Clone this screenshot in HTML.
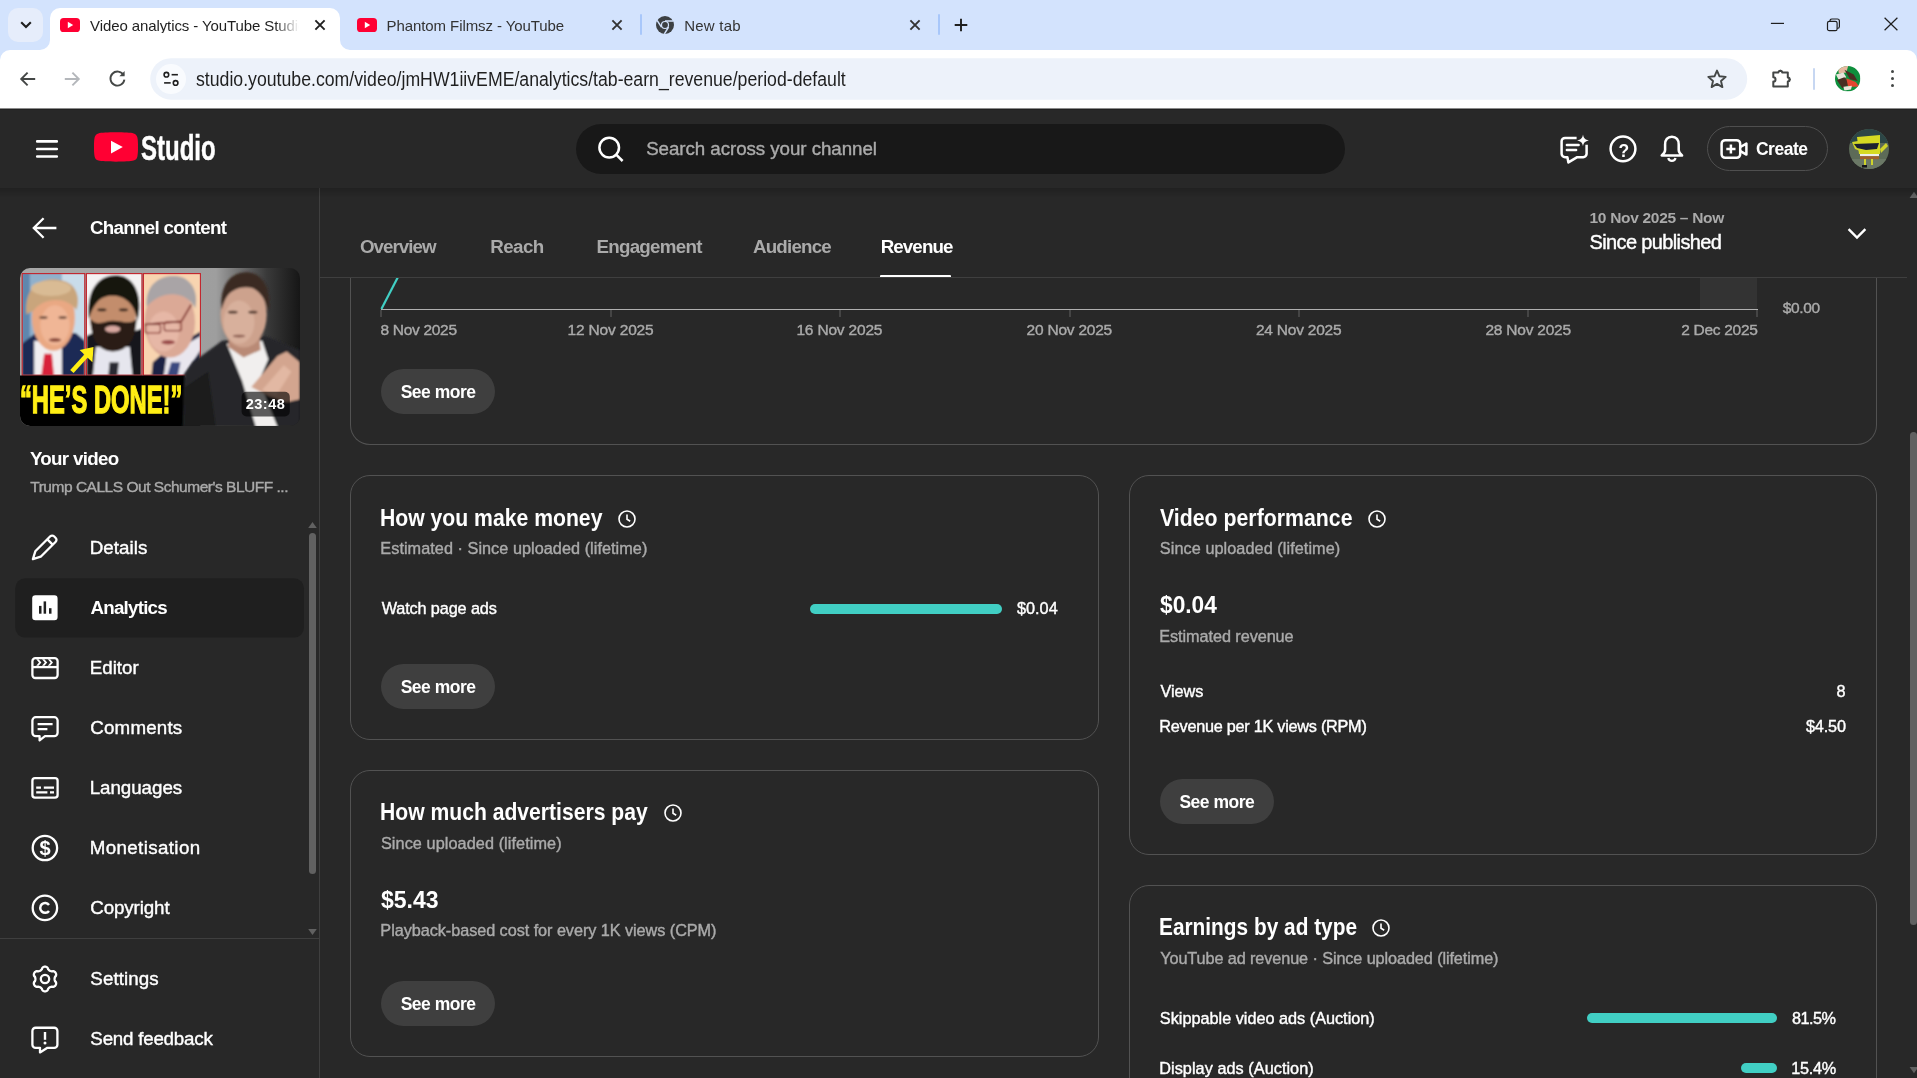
<!DOCTYPE html>
<html lang="en"><head><meta charset="utf-8"><title>Video analytics - YouTube Studio</title>
<style>
html,body{margin:0;padding:0}
body{width:1917px;height:1078px;overflow:hidden;position:relative;background:#282828;font-family:"Liberation Sans",sans-serif}
#root{position:absolute;left:0;top:0;width:1917px;height:1078px;will-change:transform}
.t{position:absolute;white-space:nowrap;line-height:1;z-index:4}
svg{z-index:4;overflow:visible}

#tabstrip{position:absolute;left:0;top:0;width:1917px;height:62px;background:#d3e3fd}
#atab{position:absolute;left:50px;top:8px;width:290px;height:42px;background:#fff;border-radius:10px 10px 0 0}
#toolbar{position:absolute;left:0;top:50px;width:1917px;height:58px;background:#fff;border-radius:10px 10px 0 0}
#urlbar{position:absolute;left:150px;top:59px;width:1597px;height:40px;border-radius:20px;background:#edf2fa}

#ythead{position:absolute;left:0;top:108px;width:1917px;height:80px;background:#282828}
#headshadow{position:absolute;left:0;top:188px;width:1917px;height:9px;background:linear-gradient(rgba(0,0,0,.18),rgba(0,0,0,0));z-index:5}
#search{position:absolute;left:576px;top:124px;width:768.5px;height:50px;border-radius:25px;background:#181818}
#create{position:absolute;left:1707px;top:126px;width:120.5px;height:45px;border-radius:23px;border:1px solid #4f4f4f;box-sizing:border-box}
#sideborder{position:absolute;left:319px;top:188px;width:1px;height:890px;background:#3f3f3f}
#thumb{position:absolute;left:20px;top:268px;width:280px;height:158px;border-radius:10px;background:#111;overflow:hidden}

.card{position:absolute;box-sizing:border-box;border:1px solid #525252;border-radius:20px}
.sm{position:absolute;width:114px;height:45px;border-radius:22.5px;background:#3f3f3f}
.bar{position:absolute;height:10px;border-radius:5px;background:#41cfc4}
</style></head>
<body>
<div id="root">
<span class="t" style="top:237.98px;font-size:18.75px;color:#aaa;font-weight:700;letter-spacing:-0.965px;left:359.93px;">Overview</span>
<span class="t" style="top:237.98px;font-size:18.75px;color:#aaa;font-weight:700;letter-spacing:-0.615px;left:490.35px;">Reach</span>
<span class="t" style="top:237.98px;font-size:18.75px;color:#aaa;font-weight:700;letter-spacing:-0.726px;left:596.45px;">Engagement</span>
<span class="t" style="top:237.98px;font-size:18.75px;color:#aaa;font-weight:700;letter-spacing:-0.798px;left:752.93px;">Audience</span>
<span class="t" style="top:237.98px;font-size:18.75px;color:#fff;font-weight:700;letter-spacing:-0.894px;left:880.65px;">Revenue</span>
<div style="position:absolute;left:880px;top:275px;width:71px;height:2px;background:#fff;z-index:3;border-radius:1px 1px 0 0"></div>
<div style="position:absolute;left:320px;top:277px;width:1587px;height:1px;background:#3f3f3f;z-index:2"></div>
<span class="t" style="top:210.08px;font-size:15.5px;color:#aaa;font-weight:700;letter-spacing:-0.301px;left:1589.52px;">10 Nov 2025 – Now</span>
<span class="t" style="top:232.17px;font-size:20px;color:#fff;letter-spacing:-0.637px;left:1589.59px;-webkit-text-stroke:0.4px #fff;">Since published</span>
<svg style="position:absolute;left:1845px;top:224px" width="24" height="20" viewBox="0 0 24 20"><path d="M3.6 5.2 L12 13.6 L20.4 5.2" fill="none" stroke="#fff" stroke-width="2.4"/></svg>
<div class="card" style="left:350px;top:230px;width:1527px;height:215px;border-top:none;border-radius:0 0 20px 20px;"></div>
<div style="position:absolute;left:321px;top:197px;width:1585px;height:80px;background:#282828;z-index:1"></div>
<div style="position:absolute;left:1700px;top:278px;width:57px;height:31px;background:#333"></div>
<div style="position:absolute;left:381px;top:308.5px;width:1377px;height:1.4px;background:#b0b0b0"></div>
<div style="position:absolute;left:380px;top:310px;width:2px;height:7px;background:#454545"></div>
<div style="position:absolute;left:610px;top:310px;width:2px;height:7px;background:#454545"></div>
<div style="position:absolute;left:839px;top:310px;width:2px;height:7px;background:#454545"></div>
<div style="position:absolute;left:1069px;top:310px;width:2px;height:7px;background:#454545"></div>
<div style="position:absolute;left:1298px;top:310px;width:2px;height:7px;background:#454545"></div>
<div style="position:absolute;left:1527px;top:310px;width:2px;height:7px;background:#454545"></div>
<div style="position:absolute;left:1756px;top:310px;width:2px;height:7px;background:#454545"></div>
<svg style="position:absolute;left:378px;top:278px;z-index:0;overflow:hidden" width="24" height="32" viewBox="0 2 24 32"><path d="M3.4 33 L20.5 0" stroke="#41cfc4" stroke-width="2.2" fill="none"/></svg>
<span class="t" style="top:322.08px;font-size:15.5px;color:#aaa;letter-spacing:-0.306px;left:380.53px;-webkit-text-stroke:0.4px #aaa;">8 Nov 2025</span>
<span class="t" style="top:322.08px;font-size:15.5px;color:#aaa;letter-spacing:-0.187px;left:567.62px;-webkit-text-stroke:0.4px #aaa;">12 Nov 2025</span>
<span class="t" style="top:322.08px;font-size:15.5px;color:#aaa;letter-spacing:-0.187px;left:796.42px;-webkit-text-stroke:0.4px #aaa;">16 Nov 2025</span>
<span class="t" style="top:322.08px;font-size:15.5px;color:#aaa;letter-spacing:-0.227px;left:1026.62px;-webkit-text-stroke:0.4px #aaa;">20 Nov 2025</span>
<span class="t" style="top:322.08px;font-size:15.5px;color:#aaa;letter-spacing:-0.227px;left:1255.92px;-webkit-text-stroke:0.4px #aaa;">24 Nov 2025</span>
<span class="t" style="top:322.08px;font-size:15.5px;color:#aaa;letter-spacing:-0.227px;left:1485.42px;-webkit-text-stroke:0.4px #aaa;">28 Nov 2025</span>
<span class="t" style="top:322.08px;font-size:15.5px;color:#aaa;letter-spacing:-0.294px;left:1681.22px;-webkit-text-stroke:0.4px #aaa;">2 Dec 2025</span>
<span class="t" style="top:300.08px;font-size:15.5px;color:#aaa;letter-spacing:-0.354px;left:1782.83px;-webkit-text-stroke:0.4px #aaa;">$0.00</span>
<div class="sm" style="left:381px;top:369px"></div><span class="t" style="top:384.04px;font-size:17.5px;color:#fff;font-weight:700;letter-spacing:-0.499px;left:400.70px;">See more</span>
<div class="card" style="left:350px;top:475px;width:749px;height:265px;"></div>
<span class="t" style="top:506.03px;font-size:24px;color:#fff;font-weight:700;left:380.08px;transform:scaleX(0.8824);transform-origin:0 0;">How you make money</span>
<svg style="position:absolute;left:616.7px;top:508.9px" width="20" height="20" viewBox="0 0 20 20"><circle cx="10" cy="10" r="8" fill="none" stroke="#fff" stroke-width="1.6"/><path d="M10 5.4 V10.2 L13.2 12.2" fill="none" stroke="#fff" stroke-width="1.6"/></svg>
<span class="t" style="top:540.24px;font-size:16.25px;color:#aaa;letter-spacing:0.039px;left:380.37px;-webkit-text-stroke:0.4px #aaa;">Estimated · Since uploaded (lifetime)</span>
<span class="t" style="top:600.24px;font-size:16.25px;color:#fff;letter-spacing:-0.121px;left:381.63px;-webkit-text-stroke:0.4px #fff;">Watch page ads</span>
<div class="bar" style="left:810px;top:604px;width:192px"></div>
<span class="t" style="top:600.24px;font-size:16.25px;color:#fff;letter-spacing:-0.004px;left:1017.03px;-webkit-text-stroke:0.4px #fff;">$0.04</span>
<div class="sm" style="left:381px;top:664px"></div><span class="t" style="top:679.04px;font-size:17.5px;color:#fff;font-weight:700;letter-spacing:-0.499px;left:400.70px;">See more</span>
<div class="card" style="left:350px;top:770px;width:749px;height:287px;"></div>
<span class="t" style="top:800.03px;font-size:24px;color:#fff;font-weight:700;left:380.09px;transform:scaleX(0.8803);transform-origin:0 0;">How much advertisers pay</span>
<svg style="position:absolute;left:662.9px;top:803px" width="20" height="20" viewBox="0 0 20 20"><circle cx="10" cy="10" r="8" fill="none" stroke="#fff" stroke-width="1.6"/><path d="M10 5.4 V10.2 L13.2 12.2" fill="none" stroke="#fff" stroke-width="1.6"/></svg>
<span class="t" style="top:835.24px;font-size:16.25px;color:#aaa;letter-spacing:0.075px;left:380.96px;-webkit-text-stroke:0.4px #aaa;">Since uploaded (lifetime)</span>
<span class="t" style="top:888.03px;font-size:24px;color:#fff;font-weight:700;left:381.20px;transform:scaleX(0.9597);transform-origin:0 0;">$5.43</span>
<span class="t" style="top:922.24px;font-size:16.25px;color:#aaa;letter-spacing:-0.059px;left:380.37px;-webkit-text-stroke:0.4px #aaa;">Playback-based cost for every 1K views (CPM)</span>
<div class="sm" style="left:381px;top:981px"></div><span class="t" style="top:996.04px;font-size:17.5px;color:#fff;font-weight:700;letter-spacing:-0.499px;left:400.70px;">See more</span>
<div class="card" style="left:1129px;top:475px;width:748px;height:380px;"></div>
<span class="t" style="top:506.03px;font-size:24px;color:#fff;font-weight:700;left:1160.25px;transform:scaleX(0.8871);transform-origin:0 0;">Video performance</span>
<svg style="position:absolute;left:1366.9px;top:508.9px" width="20" height="20" viewBox="0 0 20 20"><circle cx="10" cy="10" r="8" fill="none" stroke="#fff" stroke-width="1.6"/><path d="M10 5.4 V10.2 L13.2 12.2" fill="none" stroke="#fff" stroke-width="1.6"/></svg>
<span class="t" style="top:540.24px;font-size:16.25px;color:#aaa;letter-spacing:0.062px;left:1159.86px;-webkit-text-stroke:0.4px #aaa;">Since uploaded (lifetime)</span>
<span class="t" style="top:593.03px;font-size:24px;color:#fff;font-weight:700;left:1160.10px;transform:scaleX(0.9478);transform-origin:0 0;">$0.04</span>
<span class="t" style="top:628.24px;font-size:16.25px;color:#aaa;letter-spacing:-0.071px;left:1159.27px;-webkit-text-stroke:0.4px #aaa;">Estimated revenue</span>
<span class="t" style="top:683.24px;font-size:16.25px;color:#fff;letter-spacing:-0.049px;left:1160.53px;-webkit-text-stroke:0.4px #fff;">Views</span>
<span class="t" style="top:683.24px;font-size:16.25px;color:#fff;letter-spacing:0.975px;left:1836.49px;-webkit-text-stroke:0.4px #fff;">8</span>
<span class="t" style="top:718.24px;font-size:16.25px;color:#fff;letter-spacing:-0.260px;left:1159.27px;-webkit-text-stroke:0.4px #fff;">Revenue per 1K views (RPM)</span>
<span class="t" style="top:718.24px;font-size:16.25px;color:#fff;letter-spacing:-0.139px;left:1805.93px;-webkit-text-stroke:0.4px #fff;">$4.50</span>
<div class="sm" style="left:1159.7px;top:779px"></div><span class="t" style="top:794.04px;font-size:17.5px;color:#fff;font-weight:700;letter-spacing:-0.499px;left:1179.40px;">See more</span>
<div class="card" style="left:1129px;top:885px;width:748px;height:260px;"></div>
<span class="t" style="top:915.03px;font-size:24px;color:#fff;font-weight:700;left:1159.01px;transform:scaleX(0.8682);transform-origin:0 0;">Earnings by ad type</span>
<svg style="position:absolute;left:1370.7px;top:917.8px" width="20" height="20" viewBox="0 0 20 20"><circle cx="10" cy="10" r="8" fill="none" stroke="#fff" stroke-width="1.6"/><path d="M10 5.4 V10.2 L13.2 12.2" fill="none" stroke="#fff" stroke-width="1.6"/></svg>
<span class="t" style="top:950.24px;font-size:16.25px;color:#aaa;letter-spacing:-0.105px;left:1160.24px;-webkit-text-stroke:0.4px #aaa;">YouTube ad revenue · Since uploaded (lifetime)</span>
<span class="t" style="top:1010.24px;font-size:16.25px;color:#fff;letter-spacing:-0.005px;left:1159.86px;-webkit-text-stroke:0.4px #fff;">Skippable video ads (Auction)</span>
<div class="bar" style="left:1587px;top:1013px;width:190px"></div>
<span class="t" style="top:1010.24px;font-size:16.25px;color:#fff;letter-spacing:-0.473px;left:1791.89px;-webkit-text-stroke:0.4px #fff;">81.5%</span>
<span class="t" style="top:1060.24px;font-size:16.25px;color:#fff;letter-spacing:0.045px;left:1159.27px;-webkit-text-stroke:0.4px #fff;">Display ads (Auction)</span>
<div class="bar" style="left:1740.6px;top:1063px;width:36.6px"></div>
<span class="t" style="top:1060.24px;font-size:16.25px;color:#fff;letter-spacing:-0.340px;left:1791.36px;-webkit-text-stroke:0.4px #fff;">15.4%</span>
<div style="position:absolute;left:1910px;top:432px;width:7.4px;height:493px;border-radius:3.7px;background:#616161"></div>
<svg style="position:absolute;left:1908.5px;top:191px" width="10" height="8" viewBox="0 0 10 8"><path d="M0.6 7 L5 0.8 L9.4 7 Z" fill="#616161"/></svg>
<svg style="position:absolute;left:1908.5px;top:1066px" width="10" height="8" viewBox="0 0 10 8"><path d="M0.6 1 L5 7.2 L9.4 1 Z" fill="#616161"/></svg>
<div id="ythead"></div><div id="headshadow"></div>
<svg style="position:absolute;left:30px;top:130px" width="34" height="34" viewBox="0 0 34 34"><path d="M7.2 11.4 H26.8 M7.2 18.95 H26.8 M7.2 26.5 H26.8" stroke="#fff" stroke-width="2.6" stroke-linecap="round" fill="none"/></svg>
<svg style="position:absolute;left:94px;top:132px" width="44" height="30" viewBox="0 0 44 30"><path d="M22 0.3 C30 0.3 37 0.6 39.6 1.4 C41.6 2 43 3.5 43.4 5.6 C44 8.6 44 12 44 15 C44 18 44 21.4 43.4 24.4 C43 26.5 41.6 28 39.6 28.6 C37 29.4 30 29.7 22 29.7 C14 29.7 7 29.4 4.4 28.6 C2.4 28 1 26.5 0.6 24.4 C0 21.4 0 18 0 15 C0 12 0 8.6 0.6 5.6 C1 3.5 2.4 2 4.4 1.4 C7 0.6 14 0.3 22 0.3 Z" fill="#ff0033"/><path d="M17 8.8 L28.8 15 L17 21.4 Z" fill="#fff"/></svg>
<span class="t" style="top:130.32px;font-size:35px;color:#fff;font-weight:700;left:140.90px;transform:scaleX(0.6853);transform-origin:0 0;letter-spacing:0;-webkit-text-stroke:0.5px #fff;">Studio</span>
<div id="search"></div>
<svg style="position:absolute;left:594px;top:133px" width="32" height="32" viewBox="0 0 32 32"><circle cx="15.2" cy="14.6" r="9.8" fill="none" stroke="#fff" stroke-width="2.5"/><path d="M22.2 21.6 L28.6 28" stroke="#fff" stroke-width="2.5" fill="none"/></svg>
<span class="t" style="top:139.98px;font-size:18.75px;color:#aaa;letter-spacing:-0.064px;left:646.15px;-webkit-text-stroke:0.4px #aaa;">Search across your channel</span>
<svg style="position:absolute;left:1558px;top:133px" width="32" height="32" viewBox="0 0 32 32"><path d="M18.6 4.9 H7 A3.4 3.4 0 0 0 3.6 8.3 V20.8 A3.4 3.4 0 0 0 7 24.2 H9.4 L10.4 29.4 L19.2 24.2 H25.2 A3.4 3.4 0 0 0 28.6 20.8 V11.8" fill="none" stroke="#fff" stroke-width="2.5" stroke-linejoin="round"/><path d="M8.9 12 H20.6 M8.9 17 H18.1" stroke="#fff" stroke-width="2.5" fill="none" stroke-linecap="round"/><path d="M25 1.5 C25.6 5.2 27.1 6.8 30.9 7.4 C27.1 8 25.6 9.6 25 13.3 C24.4 9.6 22.9 8 19.1 7.4 C22.9 6.8 24.4 5.2 25 1.5 Z" fill="#fff"/></svg>
<svg style="position:absolute;left:1608px;top:134px" width="30" height="30" viewBox="0 0 30 30"><circle cx="15" cy="14.8" r="12.4" fill="none" stroke="#fff" stroke-width="2.5"/></svg>
<span class="t" style="top:141.07px;font-size:19px;color:#fff;font-weight:700;left:1617.6px;transform:scaleX(0.92);transform-origin:50% 0;">?</span>
<svg style="position:absolute;left:1657px;top:133px" width="30" height="32" viewBox="0 0 30 32"><path d="M14.9 3.65 C10.4 3.65 8.1 7 8.1 11.4 V17 C8.1 19.6 6.4 21.1 4.7 22.5 H25.1 C23.4 21.1 21.7 19.6 21.7 17 V11.4 C21.7 7 19.4 3.65 14.9 3.65 Z" fill="none" stroke="#fff" stroke-width="2.5" stroke-linejoin="round"/><path d="M11.3 25 A3.7 3.7 0 0 0 18.5 25" fill="none" stroke="#fff" stroke-width="2.3"/></svg>
<div id="create"></div>
<svg style="position:absolute;left:1719px;top:138px" width="30" height="23" viewBox="0 0 30 23"><rect x="2.6" y="2.2" width="18.6" height="17.6" rx="3.6" fill="none" stroke="#fff" stroke-width="2.5"/><path d="M21.4 9 L27.4 5.6 V16.6 L21.4 13.2" fill="none" stroke="#fff" stroke-width="2.5" stroke-linejoin="round"/><path d="M7.3 11 H16.5 M11.9 6.4 V15.6" stroke="#fff" stroke-width="2.5" fill="none"/></svg>
<span class="t" style="top:141.04px;font-size:17.5px;color:#fff;font-weight:700;letter-spacing:-0.452px;left:1755.88px;">Create</span>
<svg style="position:absolute;left:1849px;top:128.7px" width="40" height="40" viewBox="0 0 40 40"><defs><clipPath id="av"><circle cx="20" cy="20" r="20"/></clipPath></defs><g clip-path="url(#av)"><rect width="40" height="40" fill="#5d6b58"/><rect width="40" height="14" fill="#2c4646"/><rect y="30" width="40" height="10" fill="#6b7866"/><path d="M8 8 L31 6 L31 25 L10 25 Z" fill="#d6da22"/><path d="M3 13 L9 12 L11 22 L6 20 Z" fill="#cfd42a"/><path d="M31 20 L37 14 L39 17 L32 24 Z" fill="#cfd42a"/><path d="M5 15 L30 14 L28 20 L17 21 L8 19 Z" fill="#1d2230"/><rect x="11" y="25" width="19" height="2.4" fill="#eeeeea"/><rect x="11" y="27.2" width="19" height="3" fill="#a0602c"/><rect x="15" y="30" width="2" height="7" fill="#cfd42a"/><rect x="22" y="30" width="2" height="6" fill="#cfd42a"/><rect x="13" y="36" width="5" height="2.5" fill="#15151a"/></g></svg>
<div id="sideborder"></div>
<svg style="position:absolute;left:30px;top:213px" width="30" height="30" viewBox="0 0 30 30"><path d="M26.4 15 H4.6 M13.6 5.2 L3.8 15 L13.6 24.8" fill="none" stroke="#fff" stroke-width="2.3"/></svg>
<span class="t" style="top:218.98px;font-size:18.75px;color:#fff;font-weight:700;letter-spacing:-0.706px;left:89.93px;">Channel content</span>
<svg style="position:absolute;left:20px;top:268px;z-index:2" width="280" height="158" viewBox="0 0 280 158">
<defs><clipPath id="tc"><rect width="280" height="158" rx="10"/></clipPath><linearGradient id="tbg" x1="0" y1="0" x2="1" y2="0"><stop offset="0" stop-color="#a8a8a8"/><stop offset="0.70" stop-color="#9e9e9e"/><stop offset="0.88" stop-color="#3a3a3a"/><stop offset="1" stop-color="#161616"/></linearGradient><linearGradient id="tbg2" x1="0" y1="0" x2="0" y2="1"><stop offset="0" stop-color="#000" stop-opacity="0"/><stop offset="0.55" stop-color="#000" stop-opacity="0.75"/><stop offset="1" stop-color="#000" stop-opacity="1"/></linearGradient><clipPath id="p1"><rect x="2.4" y="5.8" width="62" height="101"/></clipPath><clipPath id="p2"><rect x="66.6" y="5.8" width="55" height="101"/></clipPath><clipPath id="p3"><rect x="123.6" y="5.8" width="56.4" height="101"/></clipPath><filter id="b1" x="-20%" y="-20%" width="140%" height="140%"><feGaussianBlur stdDeviation="0.9"/></filter><filter id="b2" x="-20%" y="-20%" width="140%" height="140%"><feGaussianBlur stdDeviation="1.8"/></filter></defs>
<g clip-path="url(#tc)">
<rect width="280" height="158" fill="url(#tbg)"/>
<g clip-path="url(#p1)"><g filter="url(#b1)">
<rect x="0" y="0" width="70" height="110" fill="#8fb0cc"/>
<rect x="41.9" y="4.9" width="25" height="70" fill="#c9dcea"/>
<rect x="1.8" y="4.9" width="8" height="70" fill="#5f86ad"/>
<polygon points="1.8,109.7 1.8,75.8 15.7,65.0 55.8,65.0 65.0,72.7 65.0,109.7" fill="#1d2a55"/>
<polygon points="14.2,109.7 14.2,72.7 41.9,75.8 41.9,109.7" fill="#f2eef0"/>
<polygon points="21.1,109.7 24.2,85.8 31.9,85.8 34.2,109.7" fill="#d8203a"/>
<ellipse cx="33.4" cy="49.6" rx="21.6" ry="33.1" fill="#e9a883" />
<ellipse cx="35.0" cy="57.3" rx="14.6" ry="20.0" fill="#f0b696" />
<path d="M6.5 46.5 C3.4 14.2 26.5 8.0 41.9 12.6 C57.3 15.7 60.4 31.1 56.5 41.9 C46.5 28.0 23.4 29.6 14.2 41.9 Z" fill="#c9a57c"/>
<ellipse cx="31.1" cy="20.3" rx="20.0" ry="7.7" fill="#d9bb94" />
<ellipse cx="23.4" cy="49.6" rx="4.3" ry="1.4" fill="#6a4a3a" />
<ellipse cx="42.7" cy="49.6" rx="4.3" ry="1.4" fill="#6a4a3a" />
<ellipse cx="35.0" cy="71.9" rx="6.2" ry="1.8" fill="#8a4a3a" />
</g></g>
<g clip-path="url(#p2)"><g filter="url(#b1)">
<rect x="60" y="0" width="70" height="110" fill="#f4f2f3"/>
<polygon points="66.2,109.7 66.2,68.1 75.8,63.5 112.7,63.5 122.0,60.4 122.0,109.7" fill="#15161c"/>
<polygon points="72.7,109.7 75.8,78.9 109.7,78.9 112.7,109.7" fill="#e6e6ee"/>
<polygon points="88.1,109.7 89.6,94.3 98.9,94.3 97.3,109.7" fill="#2a2a30"/>
<ellipse cx="92.7" cy="48.1" rx="23.1" ry="32.3" fill="#c38d6c" />
<path d="M68.8 51.1 C65.8 17.2 81.9 6.5 97.3 7.2 C115.8 8.0 123.5 31.1 117.4 52.7 C114.3 34.2 103.5 26.5 88.1 28.0 C78.9 29.6 72.7 37.3 68.8 51.1 Z" fill="#17130f"/>
<path d="M70.4 51.1 C71.2 75.8 81.9 83.5 92.7 83.5 C106.6 83.5 115.8 72.7 116.6 51.1 C109.7 57.3 103.5 52.7 92.7 52.7 C83.5 52.7 77.3 58.8 70.4 51.1 Z" fill="#2a1d17"/>
<ellipse cx="92.7" cy="61.1" rx="7.7" ry="3.4" fill="#d9a8a0" />
<ellipse cx="81.9" cy="41.9" rx="4.6" ry="1.4" fill="#2a1a12" />
<ellipse cx="103.5" cy="41.9" rx="4.6" ry="1.4" fill="#2a1a12" />
</g></g>
<g clip-path="url(#p3)"><g filter="url(#b1)">
<rect x="120" y="0" width="70" height="110" fill="#f8d4b0"/>
<polygon points="131.2,109.7 132.8,94.3 143.5,85.0 180.5,63.5 180.5,109.7" fill="#1f2444"/>
<polygon points="143.5,109.7 146.6,88.1 180.5,68.1 180.5,81.9 162.0,109.7" fill="#e9e6ee"/>
<polygon points="146.6,109.7 151.2,94.3 160.5,94.3 157.4,109.7" fill="#3a4a80"/>
<ellipse cx="149.7" cy="54.2" rx="25.4" ry="35.4" fill="#dba996" />
<ellipse cx="143.5" cy="63.5" rx="15.4" ry="20.0" fill="#e6b7a6" />
<path d="M126.6 38.8 C125.1 14.2 142.0 7.2 155.9 8.0 C172.8 9.5 179.0 26.5 175.1 40.4 C168.2 23.4 142.0 20.3 126.6 38.8 Z" fill="#a9a4a6"/>
<path d="M124.3 56.5 L161.3 53.4 L171.3 36.5" fill="none" stroke="#7a2420" stroke-width="1.6"/>
<rect x="125.1" y="56.5" width="15.4" height="8.5" rx="2" fill="none" stroke="#7a2420" stroke-width="1.2"/>
<rect x="144.3" y="54.2" width="16.9" height="8.5" rx="2" fill="none" stroke="#7a2420" stroke-width="1.2"/>
<ellipse cx="148.2" cy="74.2" rx="6.9" ry="2.2" fill="#9a4a48" />
</g></g>
<rect x="2.2" y="5.6" width="62.6" height="101.6" fill="none" stroke="#c3222b" stroke-width="1.1"/>
<rect x="66.4" y="5.6" width="55.6" height="101.6" fill="none" stroke="#c3222b" stroke-width="1.1"/>
<rect x="123.4" y="5.6" width="57" height="101.6" fill="none" stroke="#c3222b" stroke-width="1.1"/>
<polygon points="0,107.6 165.1,107.6 180.5,158 0,158" fill="#000"/>
<path d="M51.9 103.5 L68.1 85.8" stroke="#ffef12" stroke-width="4.6" fill="none"/>
<polygon points="59.6,81.9 73.5,78.9 72.4,94.3" fill="#ffef12"/>
<g filter="url(#b1)">
<polygon points="162.8,158.9 164.3,106.6 172.8,94.3 202.1,72.7 245.2,68.1 279.8,81.9 279.8,158.9" fill="#26282b"/>
<polygon points="164.3,158.9 165.1,118.9 188.2,103.5 195.9,158.9" fill="#1b1c1f"/>
<polygon points="206.7,75.8 242.1,72.7 248.3,91.2 239.0,112.7 257.5,158.9 235.9,158.9 222.1,112.7" fill="#f1efee"/>
<polygon points="209.8,63.5 239.0,63.5 240.6,81.9 223.6,89.6 208.2,78.9" fill="#b98a76"/>
<ellipse cx="223.6" cy="46.5" rx="23.1" ry="33.1" fill="#cda28d" />
<ellipse cx="219.0" cy="54.2" rx="15.4" ry="21.6" fill="#d8b09c" />
<path d="M201.8 41.9 C199.0 17.2 211.3 3.7 226.7 4.2 C243.6 4.6 252.1 21.9 248.3 43.4 C246.0 34.2 242.1 24.9 232.9 20.3 C222.1 17.2 209.8 21.9 205.5 31.1 C203.6 35.0 202.4 38.8 201.8 41.9 Z" fill="#3a2b24"/>
<ellipse cx="212.8" cy="44.2" rx="4.9" ry="1.4" fill="#4a3228" />
<ellipse cx="232.9" cy="44.2" rx="4.6" ry="1.4" fill="#4a3228" />
<ellipse cx="219.0" cy="68.1" rx="6.2" ry="1.4" fill="#8a5a4e" />
<polygon points="231.3,118.9 257.5,88.1 266.7,83.5 279.8,94.3 279.8,131.2 266.7,134.3 248.3,128.1" fill="#d3a58f"/>
<polygon points="242.1,122.0 263.7,97.3 271.4,103.5 256.0,128.1" fill="#e2b8a3"/>
</g>
<rect x="221.6" y="123.8" width="48.2" height="24.6" rx="5" fill="#000" fill-opacity="0.62"/>
</g></svg>
<span class="t" style="top:380.98px;font-size:38.6px;color:#ffee14;font-weight:700;left:20.40px;transform:scaleX(0.6156);transform-origin:0 0;-webkit-text-stroke:1.3px #ffee14;z-index:5;">“HE’S DONE!”</span>
<span class="t" style="top:396.98px;font-size:14.5px;color:#fff;font-weight:700;letter-spacing:0.516px;left:245.70px;z-index:5;">23:48</span>
<span class="t" style="top:449.98px;font-size:18.75px;color:#fff;font-weight:700;letter-spacing:-0.694px;left:29.88px;">Your video</span>
<span class="t" style="top:479.08px;font-size:15.5px;color:#aaa;letter-spacing:-0.480px;left:30.25px;-webkit-text-stroke:0.4px #aaa;">Trump CALLS Out Schumer's BLUFF ...</span>
<svg style="position:absolute;left:0;top:570px;z-index:0" width="320" height="75"><rect x="15.2" y="8.3" width="288.8" height="59.3" rx="10" fill="#1f1f1f"/></svg>
<span class="t" style="top:538.98px;font-size:18.75px;color:#fff;letter-spacing:0.084px;left:89.66px;-webkit-text-stroke:0.4px #fff;">Details</span>
<span class="t" style="top:598.98px;font-size:18.75px;color:#fff;font-weight:700;letter-spacing:-0.779px;left:90.53px;">Analytics</span>
<span class="t" style="top:658.98px;font-size:18.75px;color:#fff;letter-spacing:0.034px;left:89.66px;-webkit-text-stroke:0.4px #fff;">Editor</span>
<span class="t" style="top:718.98px;font-size:18.75px;color:#fff;letter-spacing:0.183px;left:90.25px;-webkit-text-stroke:0.4px #fff;">Comments</span>
<span class="t" style="top:778.98px;font-size:18.75px;color:#fff;letter-spacing:-0.035px;left:89.66px;-webkit-text-stroke:0.4px #fff;">Languages</span>
<span class="t" style="top:838.98px;font-size:18.75px;color:#fff;letter-spacing:0.377px;left:89.66px;-webkit-text-stroke:0.4px #fff;">Monetisation</span>
<span class="t" style="top:898.98px;font-size:18.75px;color:#fff;letter-spacing:-0.107px;left:90.25px;-webkit-text-stroke:0.4px #fff;">Copyright</span>
<span class="t" style="top:969.98px;font-size:18.75px;color:#fff;letter-spacing:0.083px;left:90.35px;-webkit-text-stroke:0.4px #fff;">Settings</span>
<span class="t" style="top:1029.98px;font-size:18.75px;color:#fff;letter-spacing:-0.223px;left:90.35px;-webkit-text-stroke:0.4px #fff;">Send feedback</span>
<svg style="position:absolute;left:30.3px;top:532.4px" width="30" height="30" viewBox="0 0 30 30"><path d="M2.9 27.1 L5.3 19.3 L20.3 4.3 A2.6 2.6 0 0 1 24 4.3 L25.7 6 A2.6 2.6 0 0 1 25.7 9.7 L10.7 24.7 Z" fill="none" stroke="#fff" stroke-width="2.3" stroke-linejoin="round"/><path d="M17.4 7.4 L22.6 12.6" stroke="#fff" stroke-width="2.3"/></svg>
<svg style="position:absolute;left:32px;top:595px" width="26" height="26" viewBox="0 0 26 26"><rect x="0.2" y="0.2" width="25.4" height="25" rx="3.2" fill="#fff"/><rect x="7.0" y="10.9" width="2.5" height="7.8" fill="#1f1f1f"/><rect x="11.6" y="6.4" width="2.5" height="12.3" fill="#1f1f1f"/><rect x="17.0" y="13.2" width="2.5" height="5.5" fill="#1f1f1f"/></svg>
<svg style="position:absolute;left:30px;top:655px" width="30" height="26" viewBox="0 0 30 26"><rect x="2.4" y="3.2" width="25.2" height="19.8" rx="3" fill="none" stroke="#fff" stroke-width="2.3"/><path d="M2.4 12.1 H27.6" stroke="#fff" stroke-width="2.3"/><path d="M6.2 4.3 L8.6 4.3 L11.4 7.5 L8.6 10.7 L6.2 10.7 L9.0 7.5 Z M12.0 4.3 L14.4 4.3 L17.2 7.5 L14.4 10.7 L12.0 10.7 L14.8 7.5 Z M17.8 4.3 L20.2 4.3 L23.0 7.5 L20.2 10.7 L17.8 10.7 L20.6 7.5 Z" fill="#fff"/></svg>
<svg style="position:absolute;left:30px;top:714px" width="30" height="30" viewBox="0 0 30 30"><path d="M5.8 3.2 H24.2 A3.4 3.4 0 0 1 27.6 6.6 V18.8 A3.4 3.4 0 0 1 24.2 22.2 H15 L9.6 26.4 V22.2 H5.8 A3.4 3.4 0 0 1 2.4 18.8 V6.6 A3.4 3.4 0 0 1 5.8 3.2 Z" fill="none" stroke="#fff" stroke-width="2.3" stroke-linejoin="round"/><path d="M7.6 10.2 H22.6 M7.6 15.2 H17.4" stroke="#fff" stroke-width="2.3"/></svg>
<svg style="position:absolute;left:30px;top:775px" width="30" height="26" viewBox="0 0 30 26"><rect x="2.4" y="3.1" width="25.2" height="19.6" rx="2.6" fill="none" stroke="#fff" stroke-width="2.3"/><path d="M6.2 12.7 H11 M13.8 12.7 H24 M6.2 17.4 H17.4 M20 17.4 H24" stroke="#fff" stroke-width="2.3"/></svg>
<svg style="position:absolute;left:30px;top:833px" width="30" height="30" viewBox="0 0 30 30"><circle cx="14.9" cy="15" r="12.2" fill="none" stroke="#fff" stroke-width="2.3"/></svg>
<span class="t" style="top:838.17px;font-size:20px;color:#fff;font-weight:700;left:39.4px;">$</span>
<svg style="position:absolute;left:30px;top:893px" width="30" height="30" viewBox="0 0 30 30"><circle cx="14.9" cy="14.9" r="12.2" fill="none" stroke="#fff" stroke-width="2.3"/><path d="M19 11.9 A4.9 4.9 0 1 0 19 17.9" fill="none" stroke="#fff" stroke-width="2.5"/></svg>
<svg style="position:absolute;left:30.05px;top:964.1px" width="30" height="30" viewBox="0 0 30 30"><path d="M24.60 15.00 L24.64 15.67 L24.77 16.37 L25.02 17.13 L25.90 18.13 L26.16 19.06 L26.10 19.94 L25.85 20.77 L25.42 21.51 L24.83 22.14 L24.09 22.63 L23.16 22.88 L21.85 22.61 L21.08 22.78 L20.40 23.01 L19.80 23.31 L19.24 23.69 L18.70 24.15 L18.17 24.74 L17.74 26.00 L17.06 26.69 L16.27 27.08 L15.43 27.28 L14.57 27.28 L13.73 27.08 L12.94 26.69 L12.26 26.00 L11.83 24.74 L11.30 24.15 L10.76 23.69 L10.20 23.31 L9.60 23.01 L8.92 22.78 L8.15 22.61 L6.84 22.88 L5.91 22.63 L5.17 22.14 L4.58 21.51 L4.15 20.77 L3.90 19.94 L3.84 19.06 L4.10 18.13 L4.98 17.13 L5.23 16.37 L5.36 15.67 L5.40 15.00 L5.36 14.33 L5.23 13.63 L4.98 12.87 L4.10 11.87 L3.84 10.94 L3.90 10.06 L4.15 9.23 L4.58 8.49 L5.17 7.86 L5.91 7.37 L6.84 7.12 L8.15 7.39 L8.92 7.22 L9.60 6.99 L10.20 6.69 L10.76 6.31 L11.30 5.85 L11.83 5.26 L12.26 4.00 L12.94 3.31 L13.73 2.92 L14.57 2.72 L15.43 2.72 L16.27 2.92 L17.06 3.31 L17.74 4.00 L18.17 5.26 L18.70 5.85 L19.24 6.31 L19.80 6.69 L20.40 6.99 L21.08 7.22 L21.85 7.39 L23.16 7.12 L24.09 7.37 L24.83 7.86 L25.42 8.49 L25.85 9.23 L26.10 10.06 L26.16 10.94 L25.90 11.87 L25.02 12.87 L24.77 13.63 L24.64 14.33 Z" fill="none" stroke="#fff" stroke-width="2.3" stroke-linejoin="round"/><circle cx="15" cy="15" r="4.2" fill="none" stroke="#fff" stroke-width="2.3"/></svg>
<svg style="position:absolute;left:30px;top:1024px" width="30" height="30" viewBox="0 0 30 30"><path d="M5.6 3.75 H24.2 A3.2 3.2 0 0 1 27.4 6.95 V20.65 A3.2 3.2 0 0 1 24.2 23.85 H17.4 L10 28.4 V23.85 H5.6 A3.2 3.2 0 0 1 2.4 20.65 V6.95 A3.2 3.2 0 0 1 5.6 3.75 Z" fill="none" stroke="#fff" stroke-width="2.3" stroke-linejoin="round"/><path d="M15 8 V15.8" stroke="#fff" stroke-width="2.4"/><circle cx="15" cy="18.9" r="1.5" fill="#fff"/></svg>
<div style="position:absolute;left:309px;top:533px;width:7px;height:341px;border-radius:3.5px;background:#616161"></div>
<svg style="position:absolute;left:307px;top:521px" width="11" height="8" viewBox="0 0 11 8"><path d="M1.2 7 L5.5 0.9 L9.8 7 Z" fill="#616161"/></svg>
<svg style="position:absolute;left:307px;top:928px" width="11" height="8" viewBox="0 0 11 8"><path d="M1.2 1 L5.5 7.1 L9.8 1 Z" fill="#616161"/></svg>
<div style="position:absolute;left:0;top:938px;width:319px;height:1px;background:#3f3f3f"></div>
<div id="tabstrip"></div>
<div style="position:absolute;left:8px;top:8px;width:35px;height:34px;border-radius:10px;background:#e6edfb"></div>
<svg style="position:absolute;left:20px;top:20px" width="12" height="10" viewBox="0 0 12 10"><path d="M1.2 2.2 L6 7 L10.8 2.2" fill="none" stroke="#1f1f1f" stroke-width="2.1"/></svg>
<div id="atab"></div>
<svg style="position:absolute;left:40px;top:40px" width="10" height="10"><path d="M0 10 A10 10 0 0 0 10 0 L10 10 Z" fill="#fff"/></svg>
<svg style="position:absolute;left:340px;top:40px" width="10" height="10"><path d="M10 10 A10 10 0 0 1 0 0 L0 10 Z" fill="#fff"/></svg>
<svg style="position:absolute;left:60px;top:18px" width="20" height="14" viewBox="0 0 20 14"><rect width="20" height="14" rx="3.6" fill="#ff0033"/><path d="M7.8 3.8 L13.2 7 L7.8 10.2 Z" fill="#fff"/></svg>
<svg style="position:absolute;left:357px;top:18px" width="20" height="14" viewBox="0 0 20 14"><rect width="20" height="14" rx="3.6" fill="#ff0033"/><path d="M7.8 3.8 L13.2 7 L7.8 10.2 Z" fill="#fff"/></svg>
<span class="t" style="top:18.25px;font-size:15px;color:#1f1f1f;left:90.10px;width:209px;overflow:hidden;white-space:nowrap;-webkit-mask-image:linear-gradient(90deg,#000 185px,transparent 209px);letter-spacing:-0.1px;">Video analytics - YouTube Studio</span>
<span class="t" style="top:18.25px;font-size:15px;color:#333;letter-spacing:-0.088px;left:386.57px;">Phantom Filmsz - YouTube</span>
<span class="t" style="top:18.25px;font-size:15px;color:#333;letter-spacing:0.239px;left:684.17px;">New tab</span>
<svg style="position:absolute;left:311.8px;top:17px" width="16" height="16" viewBox="-8 -8 16 16"><path d="M-4.6 -4.6 L4.6 4.6 M4.6 -4.6 L-4.6 4.6" stroke="#1f1f1f" stroke-width="1.9" fill="none"/></svg>
<svg style="position:absolute;left:609.3px;top:17px" width="16" height="16" viewBox="-8 -8 16 16"><path d="M-4.6 -4.6 L4.6 4.6 M4.6 -4.6 L-4.6 4.6" stroke="#333" stroke-width="1.9" fill="none"/></svg>
<svg style="position:absolute;left:906.7px;top:17px" width="16" height="16" viewBox="-8 -8 16 16"><path d="M-4.6 -4.6 L4.6 4.6 M4.6 -4.6 L-4.6 4.6" stroke="#333" stroke-width="1.9" fill="none"/></svg>
<div style="position:absolute;left:640px;top:14px;width:2px;height:21px;background:#a8c7fa;border-radius:1px"></div>
<div style="position:absolute;left:938px;top:14px;width:2px;height:21px;background:#a8c7fa;border-radius:1px"></div>
<svg style="position:absolute;left:656px;top:16px" width="18" height="18" viewBox="-9 -9 18 18"><circle r="9" fill="#3c4043"/><circle r="4.1" fill="#d3e3fd"/><circle r="2.9" fill="#3c4043"/><path d="M0 -4.1 L8.4 -4.1 M3.55 2.05 L-0.6 8.9 M-3.55 2.05 L-7.9 -4.6" stroke="#d3e3fd" stroke-width="1.5" fill="none"/></svg>
<svg style="position:absolute;left:953px;top:17px" width="16" height="16" viewBox="-8 -8 16 16"><path d="M-6.3 0 H6.3 M0 -6.3 V6.3" stroke="#1f1f1f" stroke-width="1.9" fill="none"/></svg>
<svg style="position:absolute;left:1770px;top:20px" width="16" height="6"><path d="M0.9 3.4 H14" stroke="#1f1f1f" stroke-width="1.2"/></svg>
<svg style="position:absolute;left:1826px;top:17.6px" width="15" height="14" viewBox="0 0 15 14"><rect x="1.5" y="3.3" width="9.6" height="9.4" rx="1.8" fill="none" stroke="#1f1f1f" stroke-width="1.2"/><path d="M4 3 V2.8 A1.8 1.8 0 0 1 5.8 1 H11.4 A2 2 0 0 1 13.4 3 V8.6 A1.8 1.8 0 0 1 11.6 10.4 H11.3" fill="none" stroke="#1f1f1f" stroke-width="1.2"/></svg>
<svg style="position:absolute;left:1883.4px;top:16.4px" width="16" height="16" viewBox="-8 -8 16 16"><path d="M-6.4 -6.2 L6.4 6.2 M6.4 -6.2 L-6.4 6.2" stroke="#1f1f1f" stroke-width="1.2" fill="none"/></svg>
<div id="toolbar"></div><div style="position:absolute;left:0;top:108px;width:1917px;height:1px;background:#8a8a8a;z-index:6"></div><div style="position:absolute;left:0;top:109px;width:1917px;height:1px;background:#202020;z-index:6"></div>
<svg style="position:absolute;left:0;top:50px" width="1917" height="60"><rect x="150.2" y="8.2" width="1597" height="41.5" rx="20.75" fill="#edf2fa"/><circle cx="171" cy="29.1" r="15" fill="#f9fbfe"/></svg>
<svg style="position:absolute;left:18px;top:69px" width="20" height="20" viewBox="0 0 20 20"><path d="M17.2 10 H3.6 M9.6 3.6 L3.2 10 L9.6 16.4" fill="none" stroke="#444746" stroke-width="1.9"/></svg>
<svg style="position:absolute;left:62px;top:69px" width="20" height="20" viewBox="0 0 20 20"><path d="M2.8 10 H16.4 M10.4 3.6 L16.8 10 L10.4 16.4" fill="none" stroke="#b4b7bb" stroke-width="1.9"/></svg>
<svg style="position:absolute;left:107px;top:68px" width="21" height="21" viewBox="0 0 21 21"><path d="M16.6 7.2 A7 7 0 1 0 17.4 11.6" fill="none" stroke="#444746" stroke-width="1.9"/><path d="M17.6 3 V8.2 H12.4 Z" fill="#444746"/></svg>
<svg style="position:absolute;left:161px;top:69px" width="20" height="20" viewBox="0 0 20 20"><circle cx="5.4" cy="5.7" r="2.3" fill="none" stroke="#1f1f1f" stroke-width="1.6"/><path d="M10.6 5.7 H16.9" stroke="#1f1f1f" stroke-width="1.6"/><circle cx="14.6" cy="13.9" r="2.3" fill="none" stroke="#1f1f1f" stroke-width="1.6"/><path d="M3.1 13.9 H9.7" stroke="#1f1f1f" stroke-width="1.6"/></svg>
<span class="t" style="top:70.03px;font-size:19.4px;color:#1f1f1f;left:196.11px;transform:scaleX(0.9120);transform-origin:0 0;">studio.youtube.com/video/jmHW1iivEME/analytics/tab-earn_revenue/period-default</span>
<svg style="position:absolute;left:1705px;top:67.2px" width="24" height="24" viewBox="0 0 24 24"><path d="M12 3.6 L14.5 9.3 L20.7 9.9 L16 14 L17.4 20.1 L12 16.9 L6.6 20.1 L8 14 L3.3 9.9 L9.5 9.3 Z" fill="none" stroke="#444746" stroke-width="1.9" stroke-linejoin="round"/></svg>
<svg style="position:absolute;left:1769px;top:67px" width="24" height="24" viewBox="0 0 24 24"><path d="M4.3 5.6 H9.4 A1.9 1.9 0 0 1 13.2 5.6 H18.8 V10.6 A1.9 1.9 0 0 1 18.8 14.4 V19.4 H4.3 V14.6 A2.2 2.2 0 0 0 4.3 10.2 Z" fill="none" stroke="#444746" stroke-width="2" stroke-linejoin="round"/><path d="M19.6 10.6 L22 12.5 L19.6 14.4 Z" fill="#444746"/><path d="M9.4 5 L11.3 2.4 L13.2 5 Z" fill="#444746"/></svg>
<div style="position:absolute;left:1813px;top:68px;width:2px;height:22px;background:#c7d7f2;border-radius:1px"></div>
<svg style="position:absolute;left:1834.8px;top:65.5px" width="25.4" height="25.4" viewBox="0 0 27 27"><defs><clipPath id="pc"><circle cx="13.5" cy="13.5" r="13.5"/></clipPath></defs><g clip-path="url(#pc)"><rect width="27" height="27" fill="#0e8f3c"/><path d="M3 0 L14 0 L12 7 L4 8 Z" fill="#e7b9a0"/><path d="M1 9 L9 7 L12 12 L4 15 Z" fill="#e8e4da"/><path d="M10 4 L20 9 L24 16 L16 14 Z" fill="#4a2e22"/><path d="M2 15 L10 12 L16 19 L8 24 Z" fill="#4a2e22"/><path d="M12 13 L22 17 L26 22 L14 22 Z" fill="#e2452f"/><path d="M9 22 L18 21 L17 25 L10 26 Z" fill="#ece6dc"/></g></svg>
<div style="position:absolute;left:1890.6px;top:69.89999999999999px;width:3.4px;height:3.4px;border-radius:2px;background:#444746"></div>
<div style="position:absolute;left:1890.6px;top:76.89999999999999px;width:3.4px;height:3.4px;border-radius:2px;background:#444746"></div>
<div style="position:absolute;left:1890.6px;top:83.89999999999999px;width:3.4px;height:3.4px;border-radius:2px;background:#444746"></div>
</div>
</body></html>
